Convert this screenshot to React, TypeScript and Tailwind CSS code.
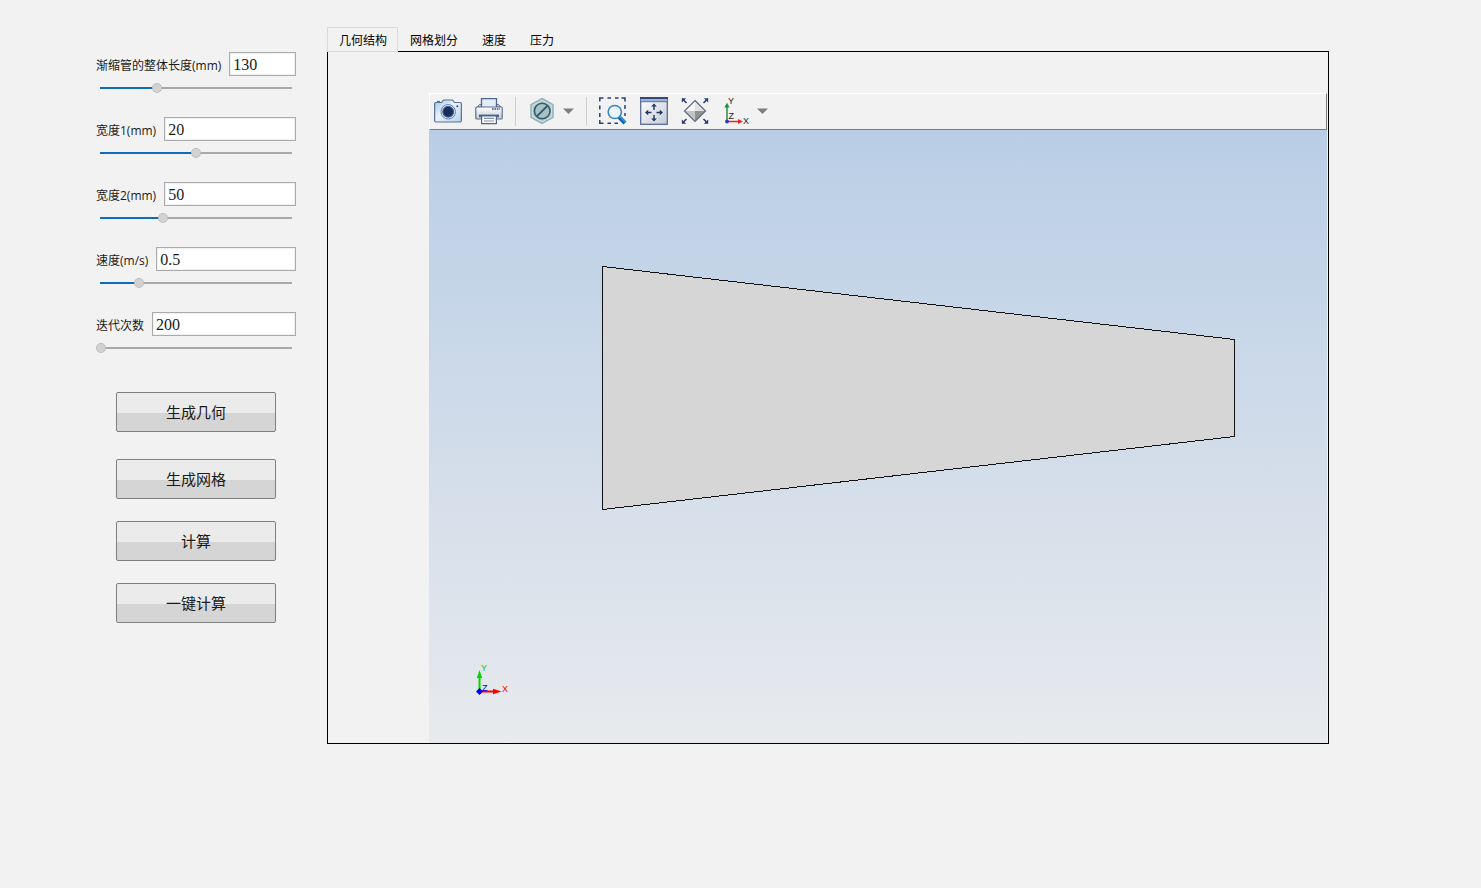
import React, { useState } from 'react';

interface Param {
  id: string;
  label: string;
  min: number;
  max: number;
  step: number;
  initial: string;
}

const params: Param[] = [
  { id: 'length', label: '渐缩管的整体长度(mm)', min: 0, max: 440, step: 1, initial: '130' },
  { id: 'width1', label: '宽度1(mm)', min: 0, max: 40, step: 1, initial: '20' },
  { id: 'width2', label: '宽度2(mm)', min: 20, max: 112, step: 1, initial: '50' },
  { id: 'velocity', label: '速度(m/s)', min: 0, max: 2.5, step: 0.1, initial: '0.5' },
  { id: 'iterations', label: '迭代次数', min: 200, max: 1000, step: 10, initial: '200' }
];

const tabs = ['几何结构', '网格划分', '速度', '压力'];

function ParamField({ param }: { param: Param }) {
  const [value, setValue] = useState(param.initial);
  const ratio = Math.min(1, Math.max(0, (Number(value) - param.min) / (param.max - param.min)));
  const fill = `${ratio * 100}%`;

  return (
    <div>
      <div className="flex items-center gap-2">
        <label htmlFor={param.id} className="h-6 whitespace-nowrap pt-0.5 text-xs leading-6">
          {param.label}
        </label>
        <input
          id={param.id}
          type="text"
          value={value}
          onChange={(e) => setValue(e.target.value)}
          className="h-6 w-0 min-w-0 flex-1 border border-[#ababab] bg-white px-[3px] pt-0.5 font-['Liberation_Serif','Noto_Sans_CJK_SC',serif] text-base leading-5 text-[#1a1a1a] shadow-[inset_0_0_0_1px_#f0f0f0] outline-none"
        />
      </div>
      <input
        type="range"
        aria-label={param.label}
        min={param.min}
        max={param.max}
        step={param.step}
        value={Number(value) || 0}
        onChange={(e) => setValue(e.target.value)}
        style={{ backgroundImage: `linear-gradient(to right, #0f6cbd ${fill}, #a9a9a9 ${fill})` }}
        className="block h-6 w-full appearance-none bg-transparent bg-[length:calc(100%-8px)_2px] bg-center bg-no-repeat [&::-webkit-slider-thumb]:size-[10px] [&::-webkit-slider-thumb]:appearance-none [&::-webkit-slider-thumb]:rounded-full [&::-webkit-slider-thumb]:border [&::-webkit-slider-thumb]:border-dotted [&::-webkit-slider-thumb]:border-[#acacac] [&::-webkit-slider-thumb]:bg-[#d2d2d2]"
      />
    </div>
  );
}

function ActionButton({ children }: { children: React.ReactNode }) {
  return (
    <button className="h-10 w-full rounded-[2px] border border-[#7f7f7f] bg-[linear-gradient(#ebebeb_20px,#d5d5d5_20px)] text-[15px] leading-5 text-[#1a1a1a]">
      {children}
    </button>
  );
}

function CameraIcon() {
  return (
    <svg width="28" height="28" viewBox="0 0 28 28">
      <defs>
        <linearGradient id="camBody" x1="0" y1="0" x2="1" y2="1">
          <stop offset="0" stopColor="#9fc3e8" />
          <stop offset=".45" stopColor="#eaf3fb" />
          <stop offset="1" stopColor="#b4d0ec" />
        </linearGradient>
      </defs>
      <path
        d="M2 5.5 H7.5 L9.5 3 H18.5 L20.5 5.5 H26 Q27.4 5.5 27.4 7 V23.5 Q27.4 25 26 25 H2 Q.6 25 .6 23.5 V7 Q.6 5.5 2 5.5Z"
        fill="url(#camBody)"
        stroke="#5a7095"
        strokeWidth="1.2"
      />
      <path d="M3 4.6 H6" stroke="#5a7095" strokeWidth="1.4" />
      <circle cx="14.2" cy="14.8" r="7.2" fill="#f1f6fb" stroke="#5f7ba5" strokeWidth="1" />
      <circle cx="14.2" cy="14.8" r="5.4" fill="#182f5e" stroke="#3d5f93" strokeWidth="1.2" />
      <circle cx="23.3" cy="9.2" r="1" fill="#24487e" />
    </svg>
  );
}

function PrinterIcon() {
  return (
    <svg width="28" height="28" viewBox="0 0 28 28">
      <defs>
        <linearGradient id="printBody" x1="0" y1="0" x2="0" y2="1">
          <stop offset="0" stopColor="#ffffff" />
          <stop offset="1" stopColor="#c3cbd8" />
        </linearGradient>
      </defs>
      <path d="M2.5 10 L4.5 7.5 H23.5 L25.5 10Z" fill="#d6deea" stroke="#5b6e8d" strokeWidth="1" />
      <path d="M6.5 10 V1.6 H21.5 V10" fill="#e3edf8" stroke="#4f6689" strokeWidth="1.3" />
      <rect x=".8" y="10" width="26.4" height="12" rx="1" fill="url(#printBody)" stroke="#5b6e8d" strokeWidth="1.2" />
      <path d="M17 12 H25" stroke="#334f7a" strokeWidth="1.3" strokeDasharray="1.6 .8" />
      <rect x="4" y="17.6" width="20" height="2.6" fill="#4b5f80" />
      <path d="M6.6 19 H21.4 V26.6 H6.6Z" fill="#fafcff" stroke="#516684" strokeWidth="1.2" />
      <path d="M9 21.4 H19 M9 24 H19" stroke="#7f90a9" strokeWidth="1.2" />
    </svg>
  );
}

function ClipIcon() {
  return (
    <svg width="28" height="28" viewBox="0 0 28 28">
      <path d="M14 1.5 L25 7.7 V20.3 L14 26.5 L3 20.3 V7.7Z" fill="#cbdbde" stroke="#94b0b5" strokeWidth="1.5" />
      <path d="M14 3.8 L23 9 V19 L14 24.2 L5 19 V9Z" fill="#b4c9cd" />
      <circle cx="14.2" cy="14" r="7.8" fill="#a9c0c5" stroke="#2b5e6b" strokeWidth="1.6" />
      <path d="M8.8 19.4 L19.6 8.6" stroke="#2b5e6b" strokeWidth="2" />
    </svg>
  );
}

function ZoomBoxIcon() {
  return (
    <svg width="28" height="28" viewBox="0 0 28 28">
      <path
        d="M.8 4.5 V1 H4.5 M8.5 1 H12 M16 1 H19.5 M22.5 1 H26 V4.5 M26 8 V12 M26 16 V19 M.8 8.5 V12.5 M.8 16 V20 M.8 23 V26.2 H4.5 M8.5 26.2 H12 M15.5 26.2 H19"
        fill="none"
        stroke="#2b3e70"
        strokeWidth="1.5"
      />
      <path d="M20 20 L26 26" stroke="#1566a8" strokeWidth="4" />
      <path d="M20.6 19.4 L26.4 25.2" stroke="#3fa4e0" strokeWidth="1.2" />
      <circle cx="15.8" cy="15" r="6.6" fill="#e9f5fc" stroke="#3b85bd" strokeWidth="1.5" />
      <path d="M11.6 14.6 Q12 11.2 15.5 10.7" fill="none" stroke="#fff" strokeWidth="1.4" />
    </svg>
  );
}

function ExtentsIcon() {
  return (
    <svg width="28" height="28" viewBox="0 0 28 28">
      <defs>
        <linearGradient id="winBody" x1="0" y1="0" x2="1" y2="1">
          <stop offset="0" stopColor="#ffffff" />
          <stop offset="1" stopColor="#c3cad8" />
        </linearGradient>
      </defs>
      <rect x=".7" y=".7" width="26.6" height="26.6" fill="url(#winBody)" stroke="#566c98" strokeWidth="1.3" />
      <rect x="0" y="0" width="28" height="2" fill="#33497c" />
      <rect x="1.3" y="2" width="25.4" height="2.2" fill="#9db4d8" />
      <path d="M1 4.7 H27" stroke="#566c98" />
      <path d="M14 8 V13 M14 18 V23 M7 15.5 H11.5 M16.5 15.5 H21" stroke="#23355f" strokeWidth="1.4" />
      <path
        d="M14 6.4 L16.8 9.6 H11.2Z M14 24.6 L16.8 21.4 H11.2Z M5 15.5 L8.2 12.7 V18.3Z M23 15.5 L19.8 12.7 V18.3Z"
        fill="#23355f"
      />
    </svg>
  );
}

function FitIcon() {
  return (
    <svg width="28" height="28" viewBox="0 0 28 28">
      <path d="M1.5 2 L5.5 6 M26.5 2 L22.5 6 M1.5 26 L5.5 22 M26.5 26 L22.5 22" stroke="#2b4071" strokeWidth="1.6" />
      <path d="M.8 1.2 H5.2 L.8 5.6Z M27.2 1.2 H22.8 L27.2 5.6Z M.8 26.8 H5.2 L.8 22.4Z M27.2 26.8 H22.8 L27.2 22.4Z" fill="#2b4071" />
      <path d="M14 3.5 L24.5 14 H3.5Z" fill="#e2e2e3" />
      <path d="M14 3.5 V14 H3.5Z" fill="#f6f6f6" />
      <path d="M3.5 14 H14 V24.5Z" fill="#c3c4c6" />
      <path d="M14 14 H24.5 L14 24.5Z" fill="#909295" />
      <path d="M14 3.5 L24.5 14 L14 24.5 L3.5 14Z" fill="none" stroke="#5c6a84" strokeWidth="1.2" />
    </svg>
  );
}

function AxesIcon() {
  return (
    <svg width="28" height="28" viewBox="0 0 28 28" className="overflow-visible">
      <path d="M5 24.5 V9" stroke="#1f9244" strokeWidth="1.5" />
      <path d="M5 5.8 L7.6 10.6 H2.4Z" fill="#1f8f42" />
      <path d="M5 24.5 H17" stroke="#ee2424" strokeWidth="1.5" />
      <path d="M21 24.5 L16 22 V27Z" fill="#ee2424" />
      <circle cx="5" cy="24.5" r="1.9" fill="#1f3fc0" />
      <g fill="#222" fontSize="9" fontFamily="Liberation Sans, sans-serif">
        <text x="6" y="6.5">Y</text>
        <text x="6.5" y="22">Z</text>
        <text x="21" y="27">X</text>
      </g>
    </svg>
  );
}

function Caret() {
  return (
    <svg width="11" height="28" viewBox="0 0 11 28">
      <path d="M0 11.5 H11 L5.5 17Z" fill="#7f7f7f" />
    </svg>
  );
}

function Separator() {
  return <div className="mx-3 h-[29px] w-px bg-[#cfcfcf]" />;
}

function Toolbar() {
  return (
    <div className="flex h-[37px] items-start border border-t-white border-r-[#7a7a7a] border-b-[#7a7a7a] border-l-white pt-[3px] pl-1">
      <div className="flex gap-[13px]">
        <button aria-label="截图"><CameraIcon /></button>
        <button aria-label="打印"><PrinterIcon /></button>
      </div>
      <Separator />
      <button aria-label="裁剪" className="flex gap-[7px]"><ClipIcon /><Caret /></button>
      <Separator />
      <div className="flex gap-[13px]">
        <button aria-label="框选缩放"><ZoomBoxIcon /></button>
        <button aria-label="缩放到窗口"><ExtentsIcon /></button>
        <button aria-label="适应大小"><FitIcon /></button>
        <button aria-label="视图方向" className="flex gap-[7px]"><AxesIcon /><Caret /></button>
      </div>
    </div>
  );
}

function GeometryView() {
  return (
    <svg viewBox="0 0 898 613" className="block h-auto w-full">
      <defs>
        <linearGradient id="sky" x1="0" y1="0" x2="0" y2="1">
          <stop offset="0" stopColor="#b9cee6" />
          <stop offset="1" stopColor="#e8eaed" />
        </linearGradient>
      </defs>
      <rect width="898" height="613" fill="url(#sky)" />
      <path
        d="M173.5 136.5 L805.5 209.5 V306.5 L173.5 379.5Z"
        fill="#d6d6d6"
        stroke="#111"
        shapeRendering="crispEdges"
      />
      {/* orientation triad */}
      <path d="M50.5 561 V547" stroke="#00d800" strokeWidth="2" />
      <path d="M50.5 540 L53.2 548 H47.8Z" fill="#00d800" />
      <path d="M51 561.5 H65" stroke="#f00" strokeWidth="2" />
      <path d="M72.5 561.5 L64 558.8 V564.2Z" fill="#f00" />
      <path d="M50.5 558 L54 561.5 L50.5 565 L47 561.5Z" fill="#00f" />
      <g fontSize="9" fontFamily="Liberation Sans, sans-serif">
        <text x="52" y="541" fill="#00d800">Y</text>
        <text x="53" y="561" fill="#00c">Z</text>
        <text x="73" y="562" fill="#e00">X</text>
      </g>
    </svg>
  );
}

export default function App() {
  const [active, setActive] = useState(0);

  return (
    <div className="flex min-h-screen items-start gap-[31px] bg-[#f2f2f2] pr-[152px] pl-24 font-['Open_Sans','Noto_Sans_CJK_SC',sans-serif] text-[#1a1a1a]">
      <aside className="w-[200px] shrink-0 pt-[52px]">
        <div className="flex flex-col gap-[17px]">
          {params.map((param) => (
            <ParamField key={param.id} param={param} />
          ))}
        </div>
        <div className="flex flex-col gap-[22px] px-5 pt-8">
          <div className="flex flex-col gap-[27px]">
            <ActionButton>生成几何</ActionButton>
            <ActionButton>生成网格</ActionButton>
          </div>
          <ActionButton>计算</ActionButton>
          <ActionButton>一键计算</ActionButton>
        </div>
      </aside>

      <main className="min-w-0 flex-1 pt-[27px]">
        <div role="tablist" className="relative -mb-px flex">
          {tabs.map((tab, index) => (
            <button
              key={tab}
              role="tab"
              aria-selected={active === index}
              onClick={() => setActive(index)}
              className={
                active === index
                  ? 'h-[25px] border border-[#d9d9d9] bg-[#f2f2f2] pt-0.5 pr-[10px] pl-[11px] text-xs text-black'
                  : 'h-[25px] px-3 pt-0.5 text-xs text-black'
              }
            >
              {tab}
            </button>
          ))}
        </div>
        <section className="border border-black bg-[#f2f2f2] pt-[41px] pr-px pl-[101px]">
          <Toolbar />
          <GeometryView />
        </section>
      </main>
    </div>
  );
}
